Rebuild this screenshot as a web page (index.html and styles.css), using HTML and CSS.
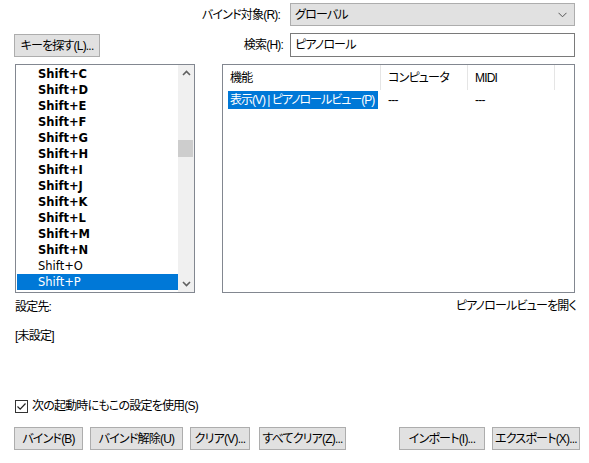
FILE: index.html
```html
<!DOCTYPE html>
<html lang="ja">
<head>
<meta charset="utf-8">
<link rel="stylesheet" href="styles.css">
</head>
<body>
<div class="app">
  <div class="row row-target">
    <label class="lbl lbl-target">バインド対象(R):</label>
    <div class="combo">
      <span>グローバル</span>
      <svg class="chev" width="9" height="6" viewBox="0 0 9 6"><path d="M0.5 0.8 L4.5 4.8 L8.5 0.8" fill="none" stroke="#555" stroke-width="1"/></svg>
    </div>
  </div>
  <div class="row row-search">
    <button class="btn btn-find">キーを探す(L)...</button>
    <div class="spacer"></div>
    <label class="lbl lbl-search">検索(H):</label>
    <div class="input">ピアノロール</div>
  </div>
  <div class="row row-main">
    <div class="listbox">
      <ul class="keys">
        <li class="b">Shift+C</li>
        <li class="b">Shift+D</li>
        <li class="b">Shift+E</li>
        <li class="b">Shift+F</li>
        <li class="b">Shift+G</li>
        <li class="b">Shift+H</li>
        <li class="b">Shift+I</li>
        <li class="b">Shift+J</li>
        <li class="b">Shift+K</li>
        <li class="b">Shift+L</li>
        <li class="b">Shift+M</li>
        <li class="b">Shift+N</li>
        <li>Shift+O</li>
        <li class="sel">Shift+P</li>
      </ul>
      <div class="vscroll">
        <svg class="arr" width="9" height="6" viewBox="0 0 9 6"><path d="M1 5 L4.5 1.5 L8 5" fill="none" stroke="#606060" stroke-width="1.6"/></svg>
        <div class="track"><div class="thumb"></div></div>
        <svg class="arr" width="9" height="6" viewBox="0 0 9 6"><path d="M1 1 L4.5 4.5 L8 1" fill="none" stroke="#606060" stroke-width="1.6"/></svg>
      </div>
    </div>
    <div class="table">
      <div class="thead">
        <div class="th c1">機能</div>
        <div class="th c2">コンピュータ</div>
        <div class="th c3">MIDI</div>
        <div class="th c4"></div>
      </div>
      <div class="tr">
        <div class="td c1"><span class="hl">表示(V) | ピアノロールビュー(P)</span></div>
        <div class="td c2">---</div>
        <div class="td c3">---</div>
      </div>
    </div>
  </div>
  <div class="row row-info">
    <span>設定先:</span>
    <span class="desc">ピアノロールビューを開く</span>
  </div>
  <div class="row row-unset">[未設定]</div>
  <div class="row row-check">
    <span class="cb"><svg width="11" height="11" viewBox="0 0 11 11"><path d="M1.5 5.5 L4.2 8.2 L9.5 2.5" fill="none" stroke="#222" stroke-width="1.2"/></svg></span>
    <span>次の起動時にもこの設定を使用(S)</span>
  </div>
  <div class="row row-buttons">
    <button class="btn w-bind">バインド(B)</button>
    <button class="btn w-unbind">バインド解除(U)</button>
    <button class="btn w-clear">クリア(V)...</button>
    <button class="btn w-clearall">すべてクリア(Z)...</button>
    <div class="spacer"></div>
    <button class="btn w-import">インポート(I)...</button>
    <button class="btn w-export">エクスポート(X)...</button>
  </div>
</div>
</body>
</html>
```

FILE: styles.css
```css
* { box-sizing: border-box; }
html, body { margin: 0; padding: 0; background: #ffffff; }
body {
  font-family: "Liberation Sans", "Noto Sans CJK JP", sans-serif;
  font-size: 12px;
  line-height: 16px;
  letter-spacing: -0.8px;
  color: #000;
  font-feature-settings: "palt" 1;
  width: 589px;
  height: 463px;
  overflow: hidden;
  white-space: nowrap;
}
.app { padding: 3px 14px 0 14px; }
.row { display: flex; align-items: center; }
.spacer { flex: 1; }

.row-target { justify-content: flex-end; height: 23px; }
.lbl-target { margin-right: 10px; }
.combo {
  width: 285px; height: 23px;
  background: #e1e1e1; border: 1px solid #adadad;
  display: flex; align-items: center; justify-content: space-between;
  padding: 0 7px 0 4px;
}
.chev { display: block; }

.row-search { margin-top: 7px; height: 24px; }
.btn {
  font-family: inherit; font-size: 12px; line-height: 16px; color: #000;
  letter-spacing: -0.8px; white-space: nowrap;
  font-feature-settings: "palt" 1;
  background: #e1e1e1; border: 1px solid #adadad; border-radius: 0;
  height: 23px; padding: 0; margin: 0;
}
.btn-find { width: 86px; margin-top: 1px; align-self: flex-start; }
.lbl-search { margin-right: 7px; }
.input {
  width: 285px; height: 24px; border: 1px solid #7a7a7a;
  padding: 0 4px; display: flex; align-items: center;
}

.row-main { margin-top: 7px; align-items: stretch; height: 229px; }
.listbox {
  width: 180px; margin-left: 1px; border: 1px solid #828790;
  display: flex; padding: 0 0 0 1px;
}
.keys {
  list-style: none; margin: 0; padding: 1px 0 0 0; flex: 1;
  font-family: "DejaVu Sans", sans-serif; font-size: 11.5px; letter-spacing: 0;
}
.keys li { height: 16px; line-height: 16px; padding-left: 21px; }
.keys li.b { font-weight: bold; }
.keys li.sel { background: #0078d7; color: #fff; }
.vscroll {
  width: 16px; background: #f0f0f0;
  display: flex; flex-direction: column; align-items: center;
}
.vscroll .arr { margin: 5px 0; flex: none; }
.track { flex: 1; width: 100%; }
.thumb { width: 15px; height: 17px; background: #cdcdcd; margin-top: 59px; }

.table {
  flex: 1; margin-left: 27px; border: 1px solid #828790;
}
.thead { display: flex; height: 25px; }
.th { padding-left: 7px; padding-top: 5px; line-height: 16px; border-right: 1px solid #e5e5e5; flex: none; }
.th.c4 { border-right: 0; }
.c1 { width: 158px; flex: none; }
.c2 { width: 87px; flex: none; }
.c3 { width: 87px; flex: none; }
.tr { display: flex; height: 18px; margin-top: 1px; }
.td { line-height: 18px; padding-left: 7px; overflow: hidden; }
.td.c1 { padding-left: 5px; }
.hl { display: inline-block; background: #0078d7; color: #fff; padding: 0 4px 0 2px; height: 18px; letter-spacing: -1px; }

.row-info { margin-top: 6px; justify-content: space-between; padding-left: 1px; }
.row-info .desc { margin-top: -3px; margin-right: -1px; }
.row-unset { margin-top: 13px; padding-left: 1px; }
.row-check { margin-top: 54px; padding-left: 1px; }
.cb {
  width: 13px; height: 13px; border: 1px solid #333; margin-right: 4px;
  display: flex; align-items: center; justify-content: center; background: #fff;
}
.cb svg { display: block; }
.row-buttons { margin-top: 13px; margin-right: -5px; }
.row-buttons .btn { margin-right: 7px; }
.row-buttons .btn:last-child { margin-right: 0; }
.w-bind { width: 69px; }
.w-unbind { width: 93px; }
.w-clear { width: 60px; margin-right: 9px !important; }
.w-clearall { width: 87px; }
.w-import { width: 86px; }
.w-export { width: 88px; }
```
